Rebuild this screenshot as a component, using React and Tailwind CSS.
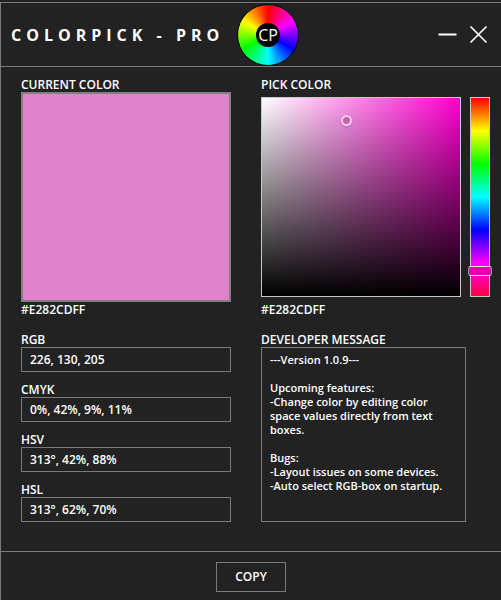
const FIELDS = [
  { label: 'RGB', value: '226, 130, 205' },
  { label: 'CMYK', value: '0%, 42%, 9%, 11%' },
  { label: 'HSV', value: '313°, 42%, 88%' },
  { label: 'HSL', value: '313°, 62%, 70%' },
];

const MESSAGE = [
  '---Version 1.0.9---',
  '',
  'Upcoming features:',
  '-Change color by editing color',
  'space values directly from text',
  'boxes.',
  '',
  'Bugs:',
  '-Layout issues on some devices.',
  '-Auto select RGB-box on startup.',
];

function Label({ children }) {
  return <div className="h-[14px] text-[12px] leading-[14px] font-semibold text-white">{children}</div>;
}

export default function App() {
  return (
    <div className="w-[501px] h-[600px] bg-[#222222] pt-[2px] text-white font-['Open_Sans','Noto_Sans',sans-serif] overflow-hidden">
      <div className="h-[598px] flex flex-col border-t border-l border-[#7a7a7a]">
        {/* Title bar */}
        <div className="h-[64px] shrink-0 flex items-center pl-[10px] pr-[13px] border-b border-[#7a7a7a]">
          <span className="w-[226px] text-[16px] font-bold tracking-[5px] whitespace-nowrap">COLORPICK - PRO</span>
          <div className="w-[62px] h-[62px] rounded-full border border-black flex items-center justify-center bg-[conic-gradient(#ff0000,#ff00ff,#0000ff,#00ffff,#00ff00,#ffff00,#ff0000)]">
            <div className="w-[24px] h-[24px] rounded-full bg-black flex items-center justify-center text-[16px] leading-none">CP</div>
          </div>
          <div className="ml-auto flex items-center gap-[12px]">
            <svg width="19" height="19" viewBox="0 0 19 19" stroke="white" strokeWidth="2" fill="none">
              <path d="M0.5 9.5H18.5" />
            </svg>
            <svg width="19" height="19" viewBox="0 0 19 19" stroke="white" strokeWidth="1.7" fill="none">
              <path d="M1.5 1.5L17.5 17.5M17.5 1.5L1.5 17.5" />
            </svg>
          </div>
        </div>

        {/* Main */}
        <div className="h-[484px] shrink-0 flex pl-[20px] pt-[11px]">
          <div className="w-[210px] shrink-0">
            <Label>CURRENT COLOR</Label>
            <div className="h-[210px] bg-[#e282cd] border-2 border-[#808080]" />
            <div className="mt-px"><Label>#E282CDFF</Label></div>
            <div className="mt-[16px] flex flex-col gap-[11px]">
              {FIELDS.map((f) => (
                <div key={f.label}>
                  <Label>{f.label}</Label>
                  <div className="h-[25px] border border-[#7a7a7a] pl-[8px] text-[12px] leading-[23px] font-semibold">{f.value}</div>
                </div>
              ))}
            </div>
          </div>

          <div className="w-[230px] ml-[30px] shrink-0">
            <Label>PICK COLOR</Label>
            <div className="mt-[5px] flex gap-[9px]">
              <div className="relative w-[200px] h-[200px] border border-[#c8c8c8] bg-[linear-gradient(to_bottom,transparent,#000000),linear-gradient(to_right,#ffffff,#ff00d0)]">
                <div className="absolute left-[79px] top-[17px] w-[11px] h-[11px] rounded-full border-2 border-[#ecd0e6] bg-[#c860ac] shadow-sm" />
              </div>
              <div className="relative w-[20px] h-[200px] border border-[#c8c8c8] bg-[linear-gradient(to_bottom,#ff0000,#ffff00,#00ff00,#00ffff,#0000ff,#ff00ff,#ff0040)]">
                <div className="absolute -left-[3px] top-[168px] w-[24px] h-[10px] rounded-[3px] border border-x-[#9a9a9a] border-y-[#e8e8e8] bg-[#e000b4]" />
              </div>
            </div>
            <div className="mt-[6px]"><Label>#E282CDFF</Label></div>
            <div className="mt-[16px]"><Label>DEVELOPER MESSAGE</Label></div>
            <div className="w-[205px] h-[175px] border border-[#7a7a7a] pl-[8px] pt-[5px] text-[11px] leading-[14px] font-semibold whitespace-pre">
              {MESSAGE.map((line, i) => (
                <div key={i} className="h-[14px]">{line}</div>
              ))}
            </div>
          </div>
        </div>

        {/* Footer */}
        <div className="flex-1 flex justify-center pt-[10px] border-t border-[#7a7a7a]">
          <button className="w-[70px] h-[30px] border border-[#7a7a7a] text-[12px] font-semibold">COPY</button>
        </div>
      </div>
    </div>
  );
}
